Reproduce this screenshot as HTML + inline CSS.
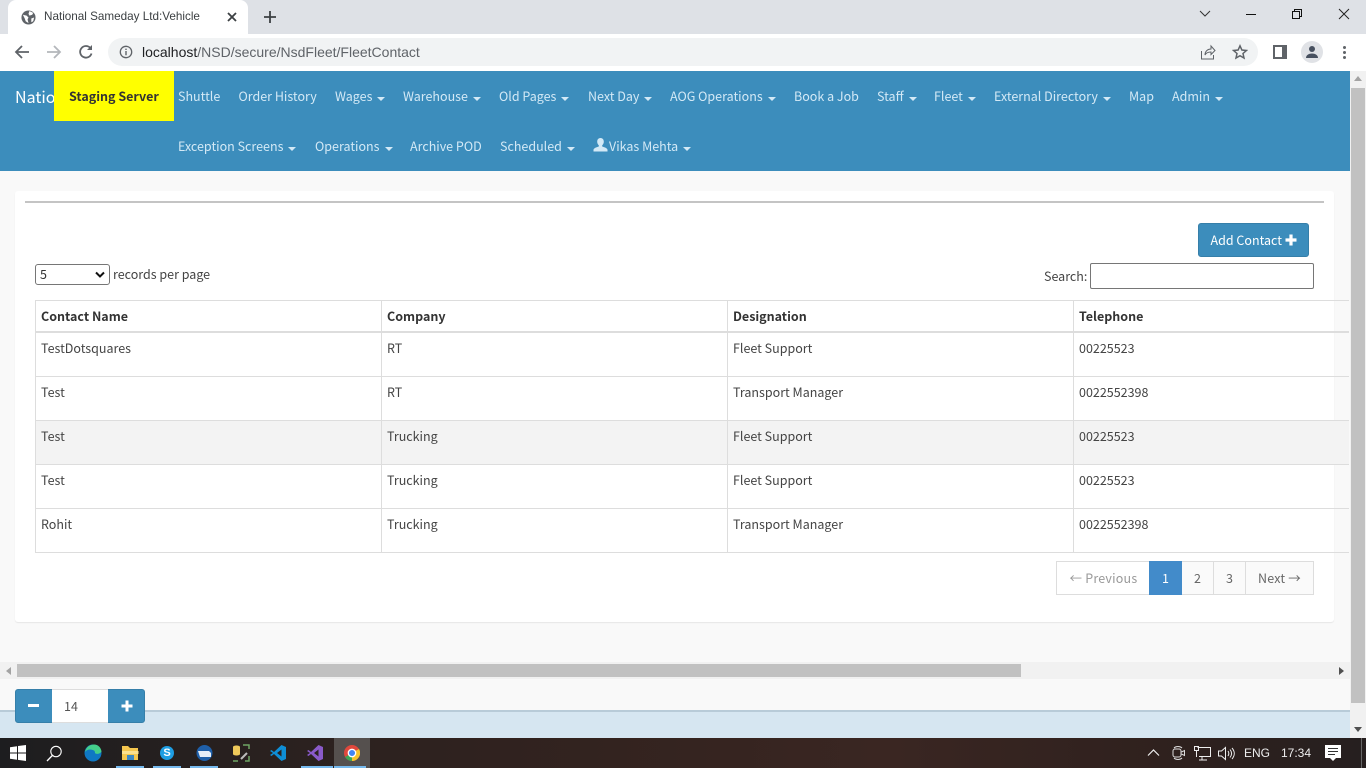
<!DOCTYPE html>
<html><head><meta charset="utf-8"><title>National Sameday Ltd:Vehicle</title>
<style>
html,body{margin:0;padding:0;width:1366px;height:768px;overflow:hidden;background:#f9f9f9}
*{box-sizing:border-box}
.a{position:absolute}
.t{position:absolute;white-space:nowrap;line-height:20px;height:20px;font-family:"Noto Sans CJK JP","Liberation Sans",sans-serif;font-size:12.5px;color:#444}
.c{font-family:"Liberation Sans",Arial,sans-serif}
.n{color:#d3e9f6}
.n i{display:inline-block;width:0;height:0;border-left:4px solid transparent;border-right:4px solid transparent;border-top:4px solid #d3e9f6;vertical-align:middle;margin-left:5px;margin-top:2px}
.b{font-weight:700;color:#333}
</style></head><body>
<!-- Chrome tab strip -->
<div class="a" style="left:0;top:0;width:1366px;height:34px;background:#dee1e6"></div>
<div class="a" style="left:8px;top:0;width:240px;height:34px;background:#fff;border-radius:8px 8px 0 0"></div>
<svg class="a" style="left:21px;top:10px" width="15" height="15" viewBox="0 0 16 16"><circle cx="8" cy="8" r="7.5" fill="#5f6368"/><path d="M2 5l4 1 2 2-1 2 1 4-3-2-1-3zM9 1l4 2-1 2-3 1-1-2zM11 9l3-1-1 4-2 1z" fill="#fff"/></svg>
<div class="t c" style="left:44px;top:7px;font-size:11.700px;color:#3c4043">National Sameday Ltd:Vehicle</div>
<svg class="a" style="left:226px;top:11px" width="12" height="12" viewBox="0 0 12 12"><path d="M2 2l8 8M10 2l-8 8" stroke="#3c4043" stroke-width="1.8"/></svg>
<svg class="a" style="left:263px;top:10px" width="14" height="14" viewBox="0 0 14 14"><path d="M7 1v12M1 7h12" stroke="#3c4043" stroke-width="1.8"/></svg>
<svg class="a" style="left:1199px;top:9px" width="12" height="10" viewBox="0 0 12 10"><path d="M1 2l5 5 5-5" stroke="#333" fill="none"/></svg>
<div class="a" style="left:1246px;top:14px;width:10px;height:1px;background:#111"></div>
<svg class="a" style="left:1291px;top:8px" width="12" height="12" viewBox="0 0 12 12"><path d="M1.5 3.5h7v7h-7zM3.5 3.5v-2h7v7h-2" stroke="#111" fill="none"/></svg>
<svg class="a" style="left:1338px;top:8px" width="12" height="12" viewBox="0 0 12 12"><path d="M1 1l10 10M11 1l-10 10" stroke="#222"/></svg>
<!-- toolbar -->
<div class="a" style="left:0;top:34px;width:1366px;height:37px;background:#fff"></div>
<svg class="a" style="left:14px;top:44px" width="16" height="16" viewBox="0 0 16 16"><path d="M15 8H2M8 2L2 8l6 6" stroke="#5f6368" stroke-width="1.8" fill="none"/></svg>
<svg class="a" style="left:46px;top:44px" width="16" height="16" viewBox="0 0 16 16"><path d="M1 8h13M8 2l6 6-6 6" stroke="#b4b7bb" stroke-width="1.8" fill="none"/></svg>
<svg class="a" style="left:78px;top:44px" width="16" height="16" viewBox="0 0 16 16"><path d="M13.5 9.5A5.8 5.8 0 1 1 12.3 4" stroke="#5f6368" stroke-width="1.8" fill="none"/><path d="M14 1v5H9z" fill="#5f6368"/></svg>
<div class="a" style="left:108px;top:38px;width:1150px;height:28px;background:#f1f3f4;border-radius:14px"></div>
<svg class="a" style="left:119px;top:45px" width="14" height="14" viewBox="0 0 14 14"><circle cx="7" cy="7" r="5.7" stroke="#5f6368" stroke-width="1.3" fill="none"/><path d="M7 6v4.200M7 3.600v1.400" stroke="#5f6368" stroke-width="1.4"/></svg>
<div class="t c" style="left:142px;top:42px;font-size:14px;color:#5f6368"><span style="color:#202124">localhost</span>/NSD/secure/NsdFleet/FleetContact</div>
<svg class="a" style="left:1200px;top:44px" width="16" height="16" viewBox="0 0 16 16"><path d="M1.500 7v8h12v-4M5 11c0-4 3-6 6-6V2l4 4.500-4 4V8c-3 0-5 1-6 3z" stroke="#5f6368" fill="none"/></svg>
<svg class="a" style="left:1232px;top:44px" width="16" height="16" viewBox="0 0 16 16"><path d="M8 1.800l1.900 4.200 4.500.5-3.400 3 1 4.500L8 11.700 4 14l1-4.500-3.400-3 4.500-.5z" stroke="#5f6368" stroke-width="1.500" fill="none"/></svg>
<div class="a" style="left:1273px;top:45px;width:14px;height:14px;background:#5f6368"></div>
<div class="a" style="left:1275px;top:47px;width:7px;height:10px;background:#fff"></div>
<div class="a" style="left:1301px;top:41px;width:22px;height:22px;border-radius:50%;background:#e0e2e6"></div>
<svg class="a" style="left:1305px;top:45px" width="14" height="14" viewBox="0 0 14 14"><circle cx="7" cy="4" r="3" fill="#47505f"/><path d="M1 13c0-3 3-4.500 6-4.500s6 1.500 6 4.500z" fill="#47505f"/></svg>
<div class="a" style="left:1343px;top:46px;width:3px;height:3px;border-radius:50%;background:#5f6368"></div>
<div class="a" style="left:1343px;top:51px;width:3px;height:3px;border-radius:50%;background:#5f6368"></div>
<div class="a" style="left:1343px;top:56px;width:3px;height:3px;border-radius:50%;background:#5f6368"></div>
<!-- navbar -->
<div class="a" style="left:0;top:71px;width:1350px;height:100px;background:#3c8dbc"></div>
<div class="t" style="left:15px;top:86px;font-size:16px;color:#fff;width:39px;overflow:hidden">National</div>
<div class="a" style="left:54px;top:71px;width:120px;height:50px;background:#ff0"></div>
<div class="t b" style="left:69px;top:86px;color:#333">Staging Server</div>
<div class="t n" style="left:178px;top:86px">Shuttle</div>
<div class="t n" style="left:238.500px;top:86px">Order History</div>
<div class="t n" style="left:335px;top:86px">Wages<i></i></div>
<div class="t n" style="left:403px;top:86px">Warehouse<i></i></div>
<div class="t n" style="left:499px;top:86px">Old Pages<i></i></div>
<div class="t n" style="left:588px;top:86px">Next Day<i></i></div>
<div class="t n" style="left:670px;top:86px">AOG Operations<i></i></div>
<div class="t n" style="left:794px;top:86px">Book a Job</div>
<div class="t n" style="left:877px;top:86px">Staff<i></i></div>
<div class="t n" style="left:934px;top:86px">Fleet<i></i></div>
<div class="t n" style="left:994px;top:86px">External Directory<i></i></div>
<div class="t n" style="left:1129px;top:86px">Map</div>
<div class="t n" style="left:1172px;top:86px">Admin<i></i></div>
<div class="t n" style="left:178px;top:136px">Exception Screens<i></i></div>
<div class="t n" style="left:315px;top:136px">Operations<i></i></div>
<div class="t n" style="left:410px;top:136px">Archive POD</div>
<div class="t n" style="left:500px;top:136px">Scheduled<i></i></div>
<svg class="a" style="left:593px;top:138px" width="15" height="14" viewBox="0 0 15 14"><path d="M7.500 0c2 0 3.300 1.500 3.300 3.700 0 1.500-.7 2.800-1.600 3.500v1.300c2 .8 5.300 1.500 5.300 3.500v1.500H.5V12c0-2 3.300-2.700 5.300-3.500V7.200c-.9-.7-1.600-2-1.600-3.500C4.200 1.500 5.500 0 7.500 0z" fill="#d3e9f6"/></svg>
<div class="t n" style="left:609px;top:136px">Vikas Mehta<i></i></div>
<!-- card -->
<div class="a" style="left:15px;top:191px;width:1319px;height:431px;background:#fff;border-radius:3px;box-shadow:0 1px 1px rgba(0,0,0,.08)"></div>
<div class="a" style="left:25px;top:201px;width:1299px;height:2px;background:#c4c4c4"></div>
<div class="a" style="left:1198px;top:223px;width:111px;height:34px;background:#3c8dbc;border:1px solid #367fa9;border-radius:3px"></div>
<div class="t" style="left:1210.500px;top:230px;color:#fff">Add Contact</div>
<svg class="a" style="left:1285px;top:234px" width="12" height="12" viewBox="0 0 12 12"><path d="M6 .5v11M.5 6h11" stroke="#fff" stroke-width="3.200"/></svg>
<div class="a" style="left:35px;top:264px;width:75px;height:21px;background:#fff;border:1px solid #767676;border-radius:3px"></div>
<div class="t" style="left:40px;top:264px;color:#333">5</div>
<svg class="a" style="left:94px;top:271px" width="12" height="8" viewBox="0 0 12 8"><path d="M2 1.500l4 4 4-4" stroke="#111" stroke-width="2" fill="none"/></svg>
<div class="t" style="left:113px;top:264px">records per page</div>
<div class="t" style="left:1044px;top:266px">Search:</div>
<div class="a" style="left:1090px;top:263px;width:224px;height:26px;background:#fff;border:1px solid #767676;border-radius:2px"></div>
<!-- table -->
<div class="a" style="left:35px;top:421px;width:1314px;height:43px;background:#f3f3f3"></div>
<div class="a" style="left:35px;top:300px;width:1314px;height:1px;background:#ddd"></div>
<div class="a" style="left:35px;top:331px;width:1314px;height:2px;background:#ddd"></div>
<div class="a" style="left:35px;top:376px;width:1314px;height:1px;background:#ddd"></div>
<div class="a" style="left:35px;top:420px;width:1314px;height:1px;background:#ddd"></div>
<div class="a" style="left:35px;top:464px;width:1314px;height:1px;background:#ddd"></div>
<div class="a" style="left:35px;top:508px;width:1314px;height:1px;background:#ddd"></div>
<div class="a" style="left:35px;top:552px;width:1314px;height:1px;background:#ddd"></div>
<div class="a" style="left:35px;top:300px;width:1px;height:253px;background:#ddd"></div>
<div class="a" style="left:381px;top:300px;width:1px;height:253px;background:#ddd"></div>
<div class="a" style="left:727px;top:300px;width:1px;height:253px;background:#ddd"></div>
<div class="a" style="left:1073px;top:300px;width:1px;height:253px;background:#ddd"></div>
<div class="t b" style="left:41px;top:306px">Contact Name</div>
<div class="t b" style="left:387px;top:306px">Company</div>
<div class="t b" style="left:733px;top:306px">Designation</div>
<div class="t b" style="left:1079px;top:306px">Telephone</div>
<div class="t" style="left:41px;top:338px">TestDotsquares</div><div class="t" style="left:387px;top:338px">RT</div><div class="t" style="left:733px;top:338px">Fleet Support</div><div class="t" style="left:1079px;top:338px">00225523</div>
<div class="t" style="left:41px;top:382px">Test</div><div class="t" style="left:387px;top:382px">RT</div><div class="t" style="left:733px;top:382px">Transport Manager</div><div class="t" style="left:1079px;top:382px">0022552398</div>
<div class="t" style="left:41px;top:426px">Test</div><div class="t" style="left:387px;top:426px">Trucking</div><div class="t" style="left:733px;top:426px">Fleet Support</div><div class="t" style="left:1079px;top:426px">00225523</div>
<div class="t" style="left:41px;top:470px">Test</div><div class="t" style="left:387px;top:470px">Trucking</div><div class="t" style="left:733px;top:470px">Fleet Support</div><div class="t" style="left:1079px;top:470px">00225523</div>
<div class="t" style="left:41px;top:514px">Rohit</div><div class="t" style="left:387px;top:514px">Trucking</div><div class="t" style="left:733px;top:514px">Transport Manager</div><div class="t" style="left:1079px;top:514px">0022552398</div>
<!-- pagination -->
<div class="a" style="left:1056px;top:561px;width:94px;height:34px;background:#fff;border:1px solid #ddd"></div>
<div class="a" style="left:1149px;top:561px;width:33px;height:34px;background:#428bca"></div>
<div class="a" style="left:1182px;top:561px;width:32px;height:34px;background:#fafafa;border:1px solid #ddd;border-left:0"></div>
<div class="a" style="left:1214px;top:561px;width:32px;height:34px;background:#fafafa;border:1px solid #ddd;border-left:0"></div>
<div class="a" style="left:1246px;top:561px;width:68px;height:34px;background:#fafafa;border:1px solid #ddd;border-left:0"></div>
<div class="t" style="left:1069.500px;top:568px;color:#999;letter-spacing:.2px">← Previous</div>
<div class="t" style="left:1162px;top:568px;color:#fff">1</div>
<div class="t" style="left:1194px;top:568px;color:#666">2</div>
<div class="t" style="left:1226px;top:568px;color:#666">3</div>
<div class="t" style="left:1258px;top:568px;color:#666;letter-spacing:.2px">Next →</div>
<!-- h scrollbar -->
<div class="a" style="left:0;top:662px;width:1350px;height:17px;background:#f1f1f1"></div>
<div class="a" style="left:17px;top:664px;width:1004px;height:13px;background:#c1c1c1"></div>
<div class="a" style="left:6px;top:667px;width:0;height:0;border-top:4px solid transparent;border-bottom:4px solid transparent;border-right:5px solid #a3a3a3"></div>
<div class="a" style="left:1339px;top:667px;width:0;height:0;border-top:4px solid transparent;border-bottom:4px solid transparent;border-left:5px solid #505050"></div>
<!-- v scrollbar -->
<div class="a" style="left:1350px;top:71px;width:16px;height:667px;background:#f1f1f1"></div>
<div class="a" style="left:1351px;top:88px;width:14px;height:615px;background:#c1c1c1"></div>
<div class="a" style="left:1354px;top:76px;width:0;height:0;border-left:4px solid transparent;border-right:4px solid transparent;border-bottom:5px solid #a3a3a3"></div>
<div class="a" style="left:1354px;top:727px;width:0;height:0;border-left:4px solid transparent;border-right:4px solid transparent;border-top:5px solid #505050"></div>
<!-- footer -->
<div class="a" style="left:0;top:710px;width:1350px;height:2px;background:#b8cbd8"></div>
<div class="a" style="left:0;top:712px;width:1350px;height:26px;background:#d6e6f1"></div>
<div class="a" style="left:15px;top:689px;width:130px;height:34px;background:#3c8dbc;border:1px solid #367fa9;border-radius:3px"></div>
<div class="a" style="left:52px;top:689px;width:56px;height:34px;background:#fff;border-top:1px solid #ddd;border-bottom:1px solid #ddd"></div>
<div class="a" style="left:28px;top:704px;width:11px;height:3px;background:#fff"></div>
<svg class="a" style="left:121px;top:700px" width="12" height="12" viewBox="0 0 12 12"><path d="M6 .5v11M.5 6h11" stroke="#fff" stroke-width="3"/></svg>
<div class="t" style="left:64px;top:696px;font-size:12.500px;color:#555">14</div>
<!-- taskbar -->
<div class="a" style="left:0;top:738px;width:1366px;height:30px;background:linear-gradient(90deg,#1d1d1f 0,#2a211f 20%,#33231f 45%,#3a2622 65%,#2f211e 85%,#261f1f 100%)"></div>
<svg class="a" style="left:10px;top:745px" width="16" height="16" viewBox="0 0 16 16"><path d="M0 2.200l7-1v6.300H0zM8 1l8-1v7.500H8zM0 8.500h7v6.300l-7-1zM8 8.500h8V16l-8-1.100z" fill="#fff"/></svg>
<svg class="a" style="left:46px;top:745px" width="17" height="17" viewBox="0 0 17 17"><circle cx="10" cy="6.500" r="5.200" stroke="#fff" stroke-width="1.100" fill="none"/><path d="M6.300 10.500L1 16" stroke="#fff" stroke-width="1.300"/></svg>
<svg class="a" style="left:84px;top:744px" width="18" height="18" viewBox="0 0 18 18"><circle cx="9" cy="9" r="8.500" fill="#0f78c4"/><path d="M1 8c1-5 5-7.500 9-7.500 4 0 7 3 7.500 7-1 2-4 3-6 2-1-.5 0-2-1.500-3C7 5 3 5 1 8z" fill="#44cf8b"/></svg>
<svg class="a" style="left:122px;top:745px" width="17" height="16" viewBox="0 0 17 16"><path d="M0 1h6l2 2h8v12H0z" fill="#f4c64f"/><path d="M0 6h16.500v3H0z" fill="#fbe08f"/><path d="M5 10h7v5H5z" fill="#3b87c4"/></svg>
<div class="a" style="left:160px;top:746px;width:14px;height:14px;border-radius:50%;background:#1e9ee3;color:#fff;font:700 11px/14px 'Liberation Sans',sans-serif;text-align:center">S</div>
<svg class="a" style="left:196px;top:745px" width="17" height="16" viewBox="0 0 17 16"><circle cx="8.500" cy="8" r="8" fill="#1f5fa8"/><path d="M2 6h11l2 2v4H4z" fill="#e6eef7"/></svg>
<svg class="a" style="left:232px;top:744px" width="18" height="18" viewBox="0 0 18 18"><path d="M1 3c0-2 7-2 7 0v7c0 2-7 2-7 0z" fill="#efc95a"/><path d="M11 1h6v4M1 17h5M17 12v5h-4" stroke="#6fa565" stroke-width="1.500" fill="none"/><path d="M9 15l6-6" stroke="#bbb" stroke-width="2"/></svg>
<svg class="a" style="left:270px;top:745px" width="16" height="16" viewBox="0 0 16 16"><path d="M11.500 0L16 2v12l-4.500 2L4 9l-2.500 2L0 10l3-2-3-2 1.500-1L4 7zM11.500 4.500L7 8l4.500 3.500z" fill="#0e8ed6"/></svg>
<svg class="a" style="left:307px;top:745px" width="16" height="16" viewBox="0 0 16 16"><path d="M11.500 0L16 2v12l-4.500 2L4 9l-2.500 2L0 10l3-2-3-2 1.500-1L4 7zM11.500 4.500L7 8l4.500 3.500z" fill="#8a5ac9"/></svg>
<div class="a" style="left:334px;top:738px;width:36px;height:30px;background:#55504e"></div>
<svg class="a" style="left:344px;top:745px" width="16" height="16" viewBox="0 0 16 16"><circle cx="8" cy="8" r="8" fill="#e0483c"/><path d="M8 8L1.100 12A8 8 0 0 0 8 16z" fill="#3aa655"/><path d="M8 8v8a8 8 0 0 0 7-12z" fill="#f6c32c"/><circle cx="8" cy="8" r="3.700" fill="#4285f4" stroke="#fff" stroke-width="1.300"/></svg>
<div class="a" style="left:116px;top:766px;width:28px;height:2px;background:#76b9ed"></div>
<div class="a" style="left:153px;top:766px;width:28px;height:2px;background:#76b9ed"></div>
<div class="a" style="left:190px;top:766px;width:28px;height:2px;background:#76b9ed"></div>
<div class="a" style="left:301px;top:766px;width:32px;height:2px;background:#76b9ed"></div>
<div class="a" style="left:334px;top:766px;width:32px;height:2px;background:#76b9ed"></div>
<svg class="a" style="left:1147px;top:748px" width="13" height="9" viewBox="0 0 13 9"><path d="M1 7.500l5.500-5.500L12 7.500" stroke="#eee" stroke-width="1.200" fill="none"/></svg>
<svg class="a" style="left:1172px;top:744px" width="14" height="18" viewBox="0 0 14 18"><path d="M2 4c2-2 6-2 8 0M2 14c2 2 6 2 8 0" stroke="#ddd" fill="none"/><rect x="1" y="5" width="8" height="8" rx="2" stroke="#ddd" fill="none"/><path d="M9.500 8l3-1.500v5l-3-1.500" stroke="#ddd" fill="none"/></svg>
<svg class="a" style="left:1194px;top:746px" width="17" height="15" viewBox="0 0 17 15"><path d="M3.500 1.500h13v9H5M8 10.500v3M5 14h8" stroke="#eee" fill="none"/><rect x=".5" y=".5" width="4" height="4" stroke="#eee" fill="none"/><path d="M2.500 4.500V11" stroke="#eee"/></svg>
<svg class="a" style="left:1218px;top:746px" width="17" height="15" viewBox="0 0 17 15"><path d="M.5 5h3l4-3.500v12l-4-3.500h-3z" stroke="#eee" fill="none"/><path d="M10 5c1 1.500 1 3.500 0 5M12 3.500c2 2.500 2 5.500 0 8M14 2c3 3.500 3 7.500 0 11" stroke="#eee" fill="none"/></svg>
<div class="t c" style="left:1244px;top:743px;font-size:12px;color:#eee">ENG</div>
<div class="t c" style="left:1281px;top:743px;font-size:12px;color:#eee">17:34</div>
<svg class="a" style="left:1325px;top:745px" width="16" height="17" viewBox="0 0 16 17"><path d="M0 0h16v13h-5l-3 3-3-3H0z" fill="#fff"/><path d="M3 3.500h10M3 6.500h10M3 9.500h7" stroke="#333"/></svg>
<div class="a" style="left:1361px;top:738px;width:1px;height:30px;background:#666"></div>
</body></html>
